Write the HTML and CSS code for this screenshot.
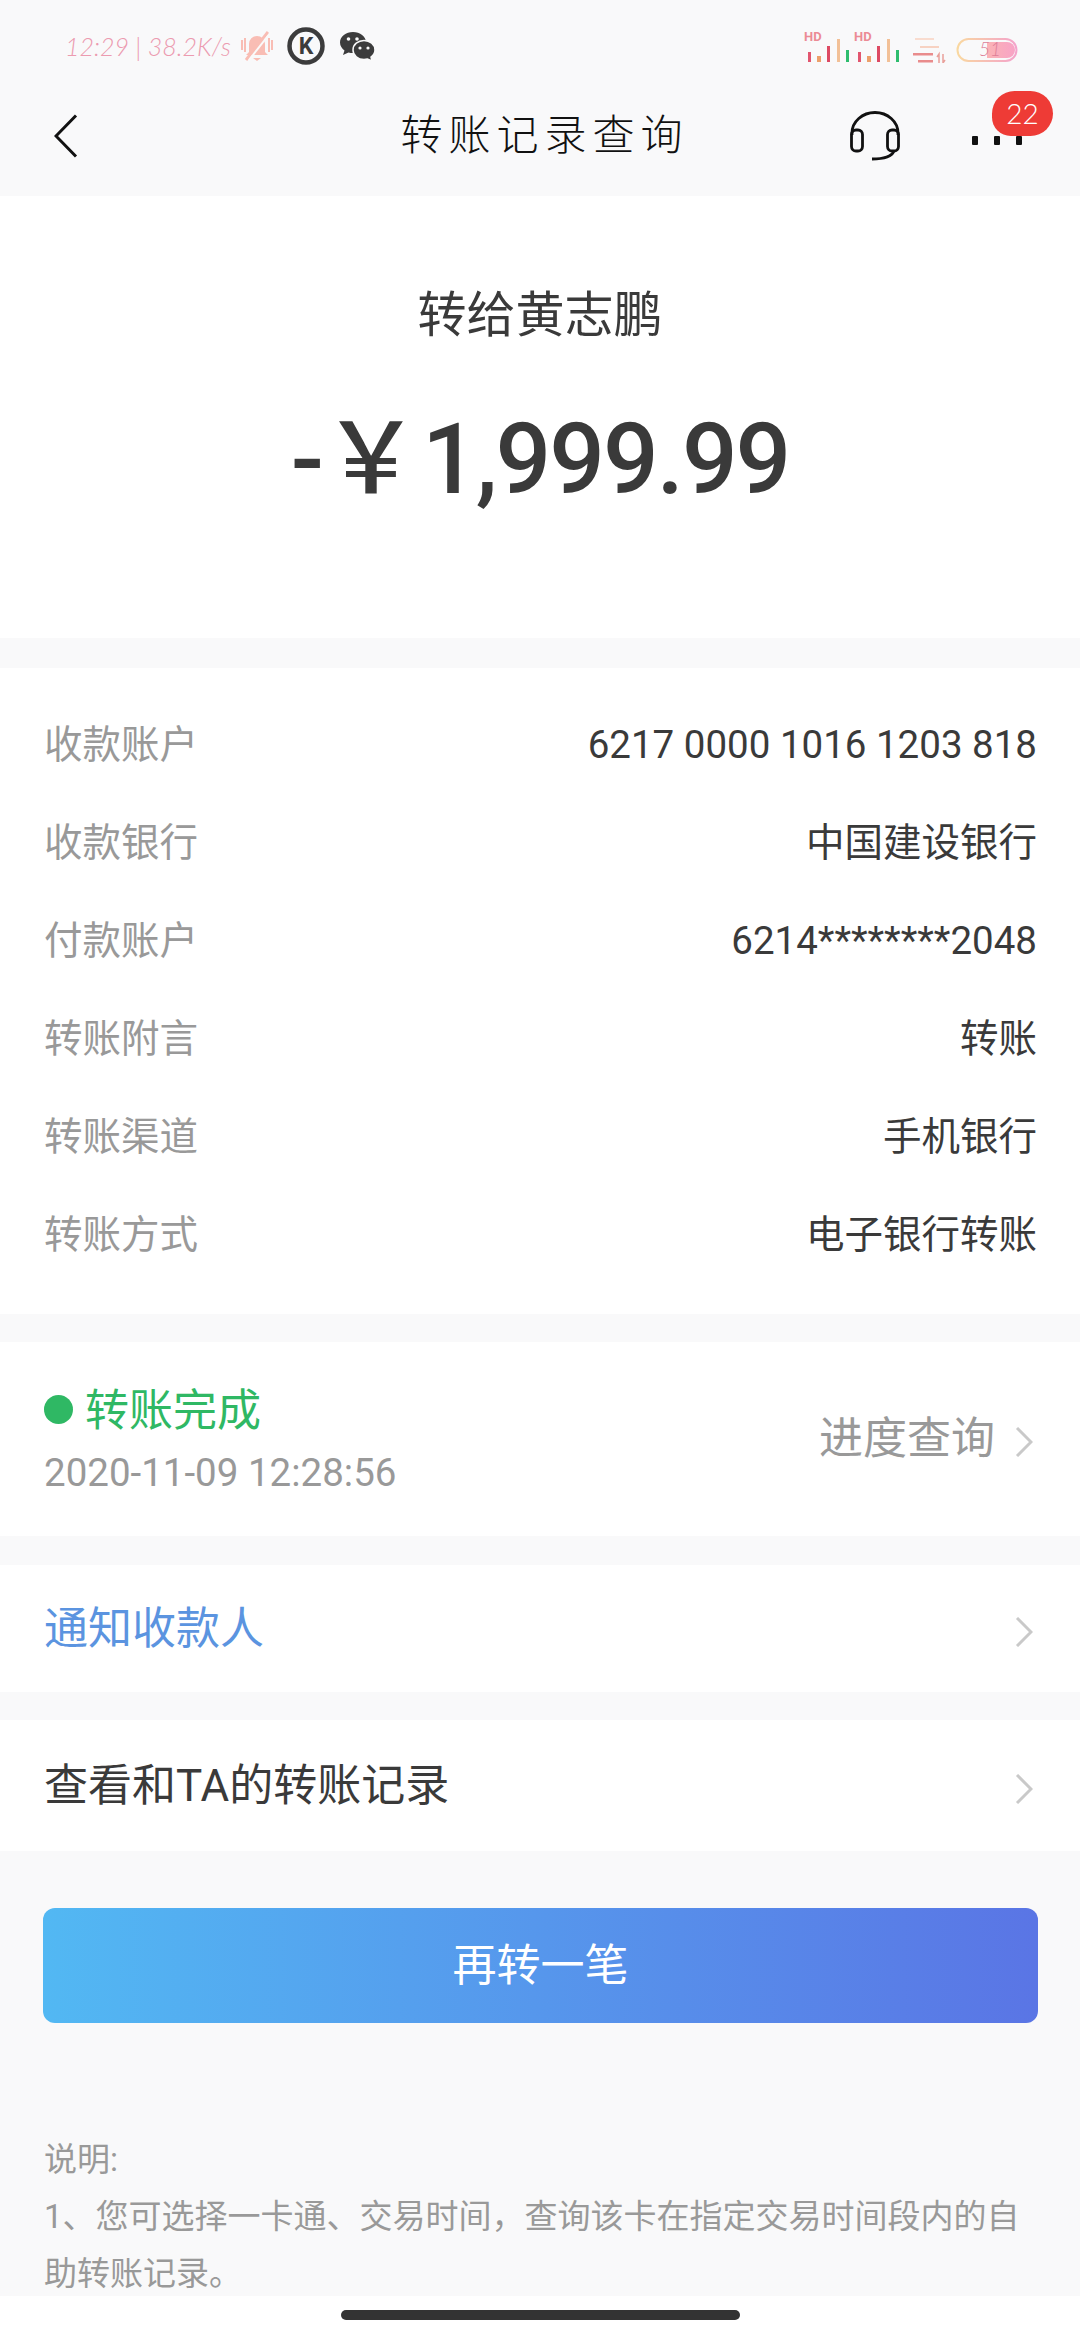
FILE: index.html
```html
<!DOCTYPE html>
<html>
    <head>
        <meta charset="utf-8">
        <title>转账记录查询</title>
        <link rel="stylesheet" href="styles.css">
    </head>
    <body>
        <div class="page">
            <main class="main">
                <div class="statusbar">
                    <div class="status-left">
                        <span class="status-text">12:29 | 38.2K/s</span>
                        <svg class="icon-bell" viewBox="0 0 34 32" fill="none">
                            <path d="M9 22V14a8 8 0 0 1 16 0v8l3 3H6z" fill="#f9bdb4"/>
                            <path d="M13 28h8l-4 3z" fill="#f9bdb4"/>
                            <path d="M2 10v10M5 8v14M29 8v14M32 10v10" stroke="#f9bdb4" stroke-width="2"/>
                            <path d="M6 30L28 2" stroke="#f9bdb4" stroke-width="3"/>
                            <path d="M9 30L31 2" stroke="#fafafa" stroke-width="2"/>
                        </svg>
                        <svg class="icon-k" viewBox="0 0 38 38">
                            <circle cx="19" cy="19" r="16.500" fill="none" stroke="#3c3c3c" stroke-width="4.500"/>
                            <text x="19" y="27" text-anchor="middle" class="k-letter">K</text>
                        </svg>
                        <svg class="icon-wechat" viewBox="0 0 36 30">
                            <path d="M14 1C7 1 1 5.500 1 11.500c0 3.500 2 6 4.500 8L4 24l5.500-2.500c1.500.4 3 .6 4.500.6C21 22 27 17 27 11.500 27 5.500 21 1 14 1z" fill="#3c3c3c"/>
                            <path d="M25 9.500c-6 0-11 4-11 9.500s5 9.500 11 9.500c1.200 0 2.400-.2 3.500-.5l4.500 2-1-4c2.500-1.800 4-4.300 4-7 0-5.500-5-9.500-11-9.500z" fill="#3c3c3c" stroke="#fafafa" stroke-width="1.500"/>
                            <circle cx="9.500" cy="8" r="1.800" fill="#fafafa"/>
                            <circle cx="18" cy="8" r="1.800" fill="#fafafa"/>
                            <circle cx="21" cy="17" r="1.600" fill="#fafafa"/>
                            <circle cx="29" cy="17" r="1.600" fill="#fafafa"/>
                        </svg>
                    </div>
                    <svg class="status-right" viewBox="0 0 216 34">
                        <defs>
                            <linearGradient id="batt-line">
                                <stop offset="0" stop-color="#f9d8a0"/>
                                <stop offset="1" stop-color="#f4a3cb"/>
                            </linearGradient>
                            <linearGradient id="batt-fill">
                                <stop offset="0" stop-color="#fbb3b5"/>
                                <stop offset="1" stop-color="#f8a3c6"/>
                            </linearGradient>
                        </defs>
                        <text x="0" y="12" class="hd">HD</text>
                        <rect x="4" y="23" width="3" height="10" fill="#e2566f"/>
                        <rect x="13" y="27" width="4" height="6" fill="#eda06b"/>
                        <rect x="23" y="17" width="3" height="16" fill="#dd4a63"/>
                        <rect x="33" y="10" width="3" height="23" fill="#f2c097"/>
                        <rect x="42" y="21" width="3" height="12" fill="#2ebd6e"/>
                        <text x="50" y="12" class="hd">HD</text>
                        <rect x="54" y="23" width="3" height="10" fill="#e2566f"/>
                        <rect x="63" y="27" width="4" height="6" fill="#eda06b"/>
                        <rect x="73" y="17" width="3" height="16" fill="#dd4a63"/>
                        <rect x="83" y="10" width="3" height="23" fill="#f2c097"/>
                        <rect x="92" y="21" width="3" height="12" fill="#2ebd6e"/>
                        <rect x="111" y="9" width="19" height="2" fill="#f9dccf"/>
                        <rect x="116" y="17" width="19" height="2" fill="#f7d2c2"/>
                        <rect x="109" y="24" width="20" height="2.500" fill="#e98c8c"/>
                        <rect x="114" y="31" width="15" height="2.500" fill="#e98c8c"/>
                        <path d="M135 25v9M133 28l2-3v9M139 25v9M141 31l-2 3" stroke="#e9a09a" stroke-width="1.500" fill="none"/>
                        <rect x="153.500" y="10" width="59" height="22" rx="11" fill="none" stroke="url(#batt-line)" stroke-width="2"/>
                        <path d="M183 13h20a8 8 0 0 1 0 16h-20z" fill="url(#batt-fill)"/>
                        <text x="175" y="27" class="batt-num">51</text>
                    </svg>
                </div>

                <header class="nav">
                    <svg class="icon-back" viewBox="0 0 24 44" fill="none">
                        <path d="M22 1.500L2 22l20 20.500" stroke="#111" stroke-width="3"/>
                    </svg>
                    <div class="nav-title">转账记录查询</div>
                    <div class="nav-actions">
                        <svg class="icon-headset" viewBox="0 0 50 50" fill="none" stroke="#111" stroke-width="2.800">
                            <path d="M2 24v-2a23 20.500 0 0 1 46 0v2"/>
                            <rect x="1.500" y="19" width="11" height="21" rx="4.500"/>
                            <rect x="37.500" y="19" width="11" height="21" rx="4.500"/>
                            <path d="M44 40c-2 5-8 8-22 8"/>
                        </svg>
                        <div class="more">
                            <span class="more-dot"></span>
                            <span class="more-dot"></span>
                            <span class="more-dot"></span>
                            <span class="badge">22</span>
                        </div>
                    </div>
                </header>

                <section class="hero">
                    <div class="hero-name">转给黄志鹏</div>
                    <div class="hero-amount"><span class="minus">-</span><span class="yen">￥</span>1,999.99</div>
                </section>

                <section class="card details">
                    <div class="detail-row"><span class="detail-label">收款账户</span><span class="detail-value">6217 0000 1016 1203 818</span></div>
                    <div class="detail-row"><span class="detail-label">收款银行</span><span class="detail-value">中国建设银行</span></div>
                    <div class="detail-row"><span class="detail-label">付款账户</span><span class="detail-value">6214********2048</span></div>
                    <div class="detail-row"><span class="detail-label">转账附言</span><span class="detail-value">转账</span></div>
                    <div class="detail-row"><span class="detail-label">转账渠道</span><span class="detail-value">手机银行</span></div>
                    <div class="detail-row"><span class="detail-label">转账方式</span><span class="detail-value">电子银行转账</span></div>
                </section>

                <section class="card state">
                    <div>
                        <div class="state-title"><span class="state-dot"></span>转账完成</div>
                        <div class="state-time">2020-11-09 12:28:56</div>
                    </div>
                    <div class="state-link">
                        <span>进度查询</span>
                        <svg class="chevron" viewBox="0 0 18 30" fill="none"><path d="M2 1l14 14L2 29" /></svg>
                    </div>
                </section>

                <section class="card link-row notify">
                    <span class="link-blue">通知收款人</span>
                    <svg class="chevron" viewBox="0 0 18 30" fill="none"><path d="M2 1l14 14L2 29" /></svg>
                </section>

                <section class="card link-row history">
                    <span>查看和TA的转账记录</span>
                    <svg class="chevron" viewBox="0 0 18 30" fill="none"><path d="M2 1l14 14L2 29" /></svg>
                </section>

                <button class="btn-again">再转一笔</button>

                <div class="note">
                    <p>说明:</p>
                    <p>1、您可选择一卡通、交易时间，查询该卡在指定交易时间段内的自助转账记录。</p>
                </div>
            </main>
            <div class="homebar"><span class="home-pill"></span></div>
        </div>
    </body>
</html>
```

FILE: styles.css
```css
* {
    box-sizing: border-box;
}

body {
    margin: 0;
    background-color: #f9f9fa;
    font-family: Roboto, "Noto Sans CJK SC", sans-serif;
    color: #3a3a3a;
}

p {
    margin: 0;
}

.page {
    display: flex;
    flex-direction: column;
    height: 2340px;
    overflow: hidden;
}

.main {
    flex: 1;
    min-height: 0;
    overflow: hidden;
}

.statusbar {
    display: flex;
    justify-content: space-between;
    align-items: center;
    height: 92px;
    padding: 0 60px 0 65px;
}

.status-left {
    display: flex;
    align-items: center;
}

.status-text {
    width: 169px;
    font-family: Lato, sans-serif;
    font-size: 25px;
    font-weight: 300;
    font-style: italic;
    white-space: nowrap;
    color: #ec9bb0;
}

.icon-bell {
    width: 34px;
    height: 32px;
    margin-left: 6px;
}

.icon-k {
    width: 38px;
    height: 38px;
    margin-left: 13px;
}

.k-letter {
    font-family: Roboto, sans-serif;
    font-size: 23px;
    font-weight: 700;
    fill: #3c3c3c;
}

.icon-wechat {
    width: 36px;
    height: 30px;
    margin-left: 14px;
}

.status-right {
    width: 216px;
    height: 34px;
}

.hd {
    font-family: Roboto, sans-serif;
    font-size: 13px;
    font-weight: 700;
    fill: #ec8b95;
}

.batt-num {
    font-family: Lato, sans-serif;
    font-size: 19px;
    font-weight: 300;
    font-style: italic;
    fill: #dd7f98;
}

.nav {
    display: grid;
    grid-template-columns: 1fr auto 1fr;
    align-items: center;
    height: 104px;
    padding: 0 58px 16px 54px;
}

.icon-back {
    width: 24px;
    height: 44px;
}

.nav-title {
    margin-left: 13px;
    font-size: 42px;
    font-weight: 300;
    line-height: 60px;
    letter-spacing: 6px;
    color: #111;
}

.nav-actions {
    display: flex;
    justify-content: flex-end;
    align-items: center;
    gap: 72px;
}

.icon-headset {
    width: 50px;
    height: 50px;
}

.more {
    position: relative;
    display: flex;
    gap: 16px;
    margin-top: 8px;
}

.more-dot {
    width: 6px;
    height: 9px;
    border-radius: 1px;
    background-color: #111;
}

.badge {
    position: absolute;
    left: 20px;
    top: -45px;
    width: 61px;
    height: 45px;
    border-radius: 24px 24px 24px 20px;
    background-color: #ee3b36;
    color: white;
    font-family: Lato, sans-serif;
    font-size: 28px;
    font-weight: 300;
    line-height: 45px;
    text-align: center;
}

.hero {
    height: 442px;
    padding-top: 85px;
    background-color: white;
    text-align: center;
}

.hero-name {
    font-size: 49px;
    line-height: 70px;
}

.hero-amount {
    margin-top: 49px;
    font-size: 98px;
    font-weight: 500;
    line-height: 120px;
    letter-spacing: -2px;
}

.yen {
    margin-right: 4px;
}

.card {
    background-color: white;
}

.details {
    margin-top: 30px;
    padding: 28px 43px 30px 44px;
}

.detail-row {
    display: flex;
    justify-content: space-between;
    align-items: center;
    height: 98px;
    font-size: 38.500px;
    line-height: 50px;
}

.detail-label {
    color: #999;
}

.state {
    display: flex;
    justify-content: space-between;
    align-items: center;
    height: 194px;
    margin-top: 28px;
    padding: 0 47px 0 44px;
}

.state-title {
    display: flex;
    align-items: center;
    gap: 12px;
    font-size: 44px;
    line-height: 60px;
    color: #2fb864;
}

.state-dot {
    width: 29px;
    height: 29px;
    margin-top: -2px;
    border-radius: 50%;
    background-color: #2fb864;
}

.state-time {
    margin-top: 7px;
    font-size: 38.500px;
    line-height: 50px;
    color: #999;
}

.state-link {
    display: flex;
    align-items: center;
    gap: 20px;
    font-size: 44px;
    line-height: 60px;
    color: #999;
}

.chevron {
    width: 18px;
    height: 30px;
    flex: none;
    margin-top: 6px;
}

.chevron path {
    stroke: #c9c9c9;
    stroke-width: 3;
}

.link-row {
    display: flex;
    justify-content: space-between;
    align-items: center;
    padding: 0 47px 0 44px;
    font-size: 44px;
    line-height: 60px;
}

.notify {
    height: 127px;
    margin-top: 29px;
}

.history {
    height: 131px;
    margin-top: 28px;
}

.link-blue {
    color: #5b94e0;
}

.btn-again {
    display: block;
    width: 995px;
    height: 115px;
    margin: 57px 0 0 43px;
    border: 0;
    border-radius: 12px;
    background: linear-gradient(90deg, #52b8f3, #5a75e5);
    color: white;
    font-family: inherit;
    font-size: 44px;
    line-height: 60px;
}

.note {
    margin-top: 108px;
    padding: 0 44px;
    font-size: 33px;
    line-height: 57px;
    color: #999;
}

.homebar {
    display: flex;
    justify-content: center;
    align-items: center;
    height: 44px;
    padding-bottom: 7px;
    background-color: white;
}

.home-pill {
    width: 399px;
    height: 10px;
    border-radius: 5px;
    background-color: #333;
}
```
